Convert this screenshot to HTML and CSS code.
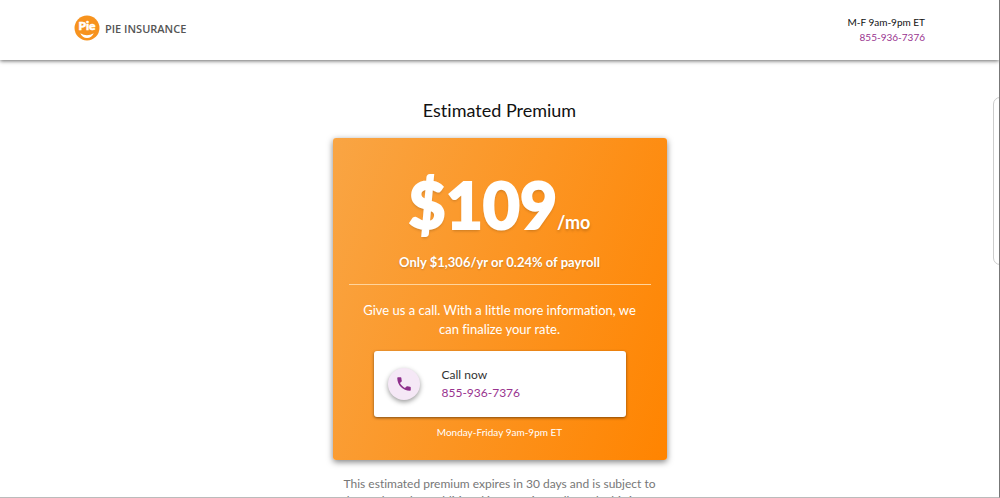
FILE: index.html
```html
<!DOCTYPE html>
<html lang="en">
<head>
  <meta charset="UTF-8" />
  <meta name="viewport" content="width=device-width, initial-scale=1" />
  <title>Estimated Premium - Pie Insurance</title>
  <link rel="stylesheet" href="styles.css">
</head>
<body>

<header class="site-header">
  <a class="logo" href="#">
    <svg class="logo-mark" viewBox="0 0 50 50" aria-hidden="true">
      <circle cx="25" cy="25" r="24" fill="#f7931e" />
      <text x="25" y="29" text-anchor="middle">Pie</text>
      <path d="M12 35 Q25 43 38 35 Q34 44 25 44 Q16 44 12 35Z" fill="#fff" />
    </svg>
    <span>PIE INSURANCE</span>
  </a>
  <div class="contact">
    <div>M-F 9am-9pm ET</div>
    <a href="tel:8559367376">855-936-7376</a>
  </div>
</header>

<main class="estimate">
  <h1>Estimated Premium</h1>

  <section class="card">
    <div class="price"><strong>$109</strong><span>/mo</span></div>
    <p class="yearly">Only $1,306/yr or 0.24% of payroll</p>
    <hr />
    <p class="pitch">Give us a call. With a little more information, we can finalize your rate.</p>

    <div class="call-box">
      <a class="call-icon" href="tel:8559367376" aria-label="Call now">
        <svg viewBox="0 0 24 24" aria-hidden="true">
          <path fill="#8e2f8b" d="M6.62 10.79c1.44 2.83 3.76 5.14 6.59 6.59l2.2-2.2c.27-.27.67-.36 1.02-.24 1.12.37 2.33.57 3.57.57.55 0 1 .45 1 1V20c0 .55-.45 1-1 1-9.39 0-17-7.61-17-17 0-.55.45-1 1-1h3.5c.55 0 1 .45 1 1 0 1.25.2 2.45.57 3.57.11.35.03.74-.25 1.02l-2.2 2.2z" />
        </svg>
      </a>
      <div>
        <div>Call now</div>
        <a href="tel:8559367376">855-936-7376</a>
      </div>
    </div>

    <p class="hours">Monday-Friday 9am-9pm ET</p>
  </section>

  <p class="disclaimer">This estimated premium expires in 30 days and is subject to change based on additional information collected. This is not</p>
</main>

<div class="side-tab"></div>

</body>
</html>
```
FILE: styles.css
```css
* {
  box-sizing: border-box;
}
body {
  font-family: Lato, sans-serif;
  font-variant-ligatures: none;
  background-color: #fff;
  color: #111;
  margin: 0;
  height: 100vh;
  overflow: hidden;
  position: relative;
  border-right: 1px solid #777;
  border-bottom: 1px solid #bbb;
}
a {
  color: #99338f;
  text-decoration: none;
}
.site-header {
  display: flex;
  justify-content: space-between;
  align-items: flex-start;
  height: 60px;
  padding: 14px 74px;
  background: white;
  box-shadow: 0 1px 4px rgba(0,0,0,0.6);
}
.logo {
  display: flex;
  align-items: center;
  gap: 5px;
  margin-top: 1px;
  color: #555;
  font-family: "Open Sans", Lato, sans-serif;
  font-size: 11px;
  font-weight: 600;
}
.logo-mark {
  width: 26px;
  height: 26px;
}
.logo-mark text {
  font-family: Lato, sans-serif;
  font-size: 23px;
  font-weight: 900;
  fill: white;
  stroke: white;
  stroke-width: 1px;
}
.contact {
  font-size: 10px;
  line-height: 15px;
  padding-top: 1px;
  text-align: right;
}
.estimate {
  width: 334px;
  margin: 0 auto;
  padding-top: 38px;
  text-align: center;
}
h1 {
  margin: 0 0 16px;
  font-size: 18px;
  line-height: 24px;
  font-weight: 400;
}
.card {
  padding: 27px 16px 20px;
  border-radius: 3px;
  background: linear-gradient(110deg, #f9a544, #ff8400);
  box-shadow: 0 2px 6px rgba(0,0,0,0.5);
  color: white;
}
.price {
  display: flex;
  align-items: baseline;
  justify-content: center;
  font-size: 18px;
  line-height: 24px;
  font-weight: 700;
  text-shadow: 0 2px 3px rgba(0,0,0,0.2);
}
.price strong {
  font-size: 64px;
  line-height: 80px;
  font-weight: 900;
  -webkit-text-stroke: 2px white;
}
.yearly {
  margin: 7px 0 12px;
  font-size: 13px;
  line-height: 20px;
  font-weight: 700;
  text-shadow: 0 1px 2px rgba(0,0,0,0.2);
}
hr {
  margin: 0 0 16px;
  border: 0;
  border-top: 1px solid #ffd49c;
}
.pitch {
  margin: 0;
  padding: 0 8px 12px;
  font-size: 13px;
  line-height: 19px;
}
.call-box {
  display: flex;
  align-items: center;
  gap: 22px;
  height: 66px;
  margin: 0 25px;
  padding: 0 14px;
  border-radius: 3px;
  background: white;
  box-shadow: 0 1px 3px rgba(0,0,0,0.5);
  color: #333;
  font-size: 12px;
  line-height: 18px;
  text-align: left;
}
.call-icon {
  display: flex;
  align-items: center;
  justify-content: center;
  width: 32px;
  height: 32px;
  border-radius: 50%;
  background: #f5e8f6;
  box-shadow: 0 2px 5px rgba(0,0,0,0.4);
}
.call-icon svg {
  width: 18px;
  height: 18px;
}
.hours {
  margin: 8px 0 0;
  font-size: 10px;
  line-height: 15px;
}
.disclaimer {
  margin: 15px 0 0;
  color: #777;
  font-size: 12px;
  line-height: 17px;
}
/* pull-out tab on the right edge of the window */
.side-tab {
  position: absolute;
  top: 97px;
  right: -8px;
  width: 14px;
  height: 168px;
  border: 1px solid #ccc;
  border-radius: 8px;
}
```
